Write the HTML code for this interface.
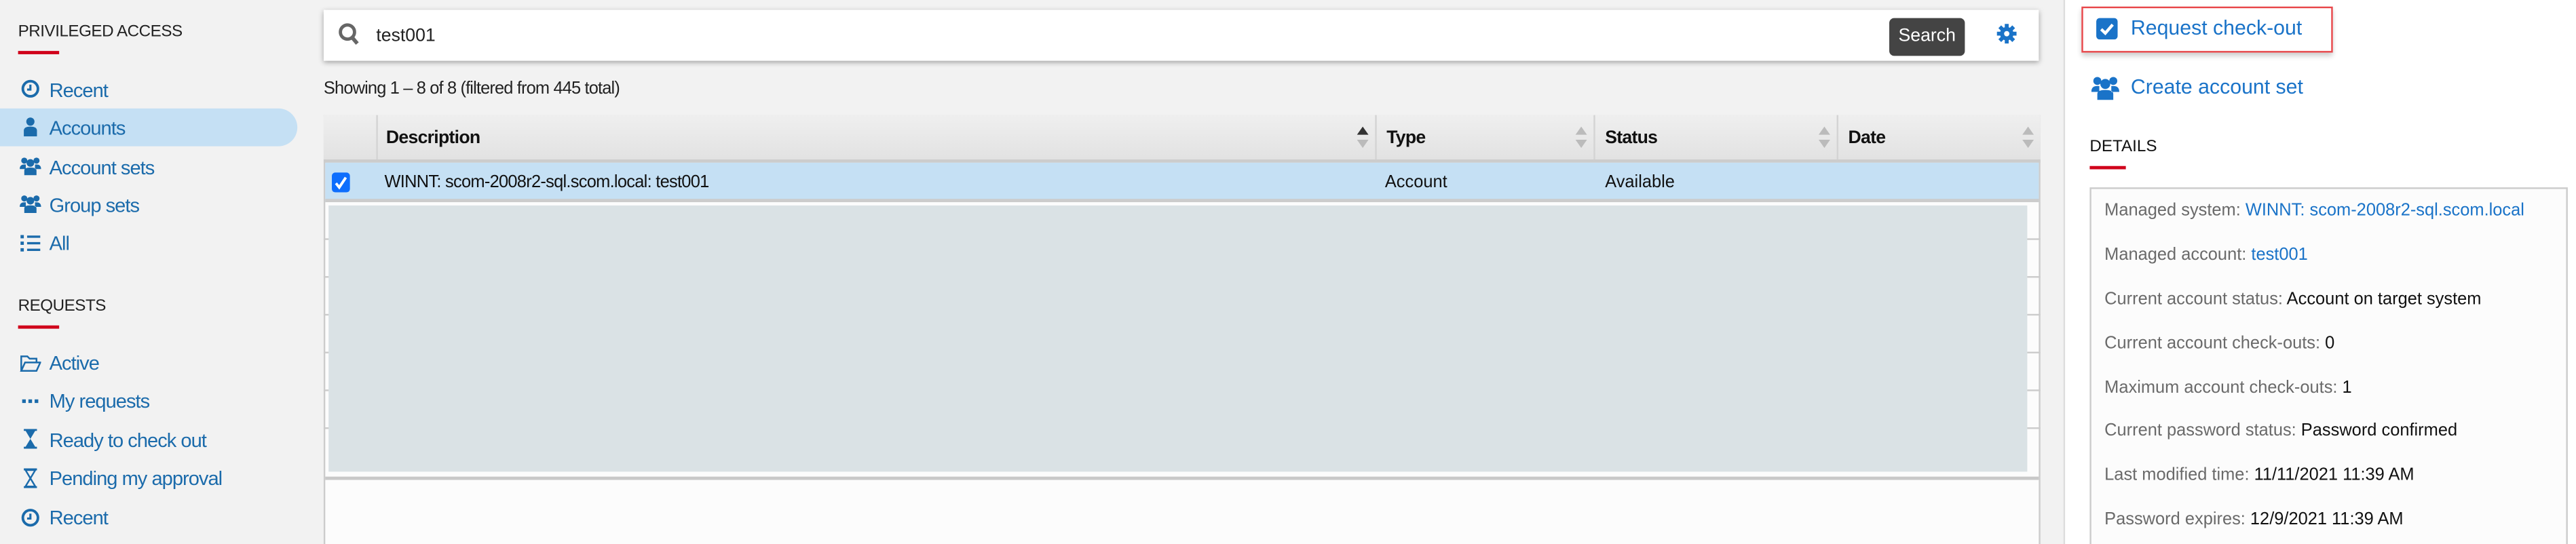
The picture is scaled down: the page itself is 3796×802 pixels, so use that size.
<!DOCTYPE html>
<html><head><meta charset="utf-8"><style>
html,body{margin:0;padding:0;width:3796px;height:802px;overflow:hidden;background:#f2f2f2}
#w{position:absolute;left:0;top:0;width:1568px;height:331px;transform:scale(2.4209,2.423);transform-origin:0 0;font-family:"Liberation Sans",sans-serif;background:#f2f2f2;overflow:hidden}
.a{position:absolute;white-space:nowrap}
.h{font-size:10px;color:#222;letter-spacing:-.2px}
.ul{position:absolute;height:2px;width:24px;background:#d0021b}
.it{font-size:12px;color:#1b6bab;letter-spacing:-.4px}
.ic{position:absolute;width:13px;height:12px}
.col{position:absolute;top:70px;height:27px;border-right:1px solid #d4d4d4;font-size:11px;color:#111;font-weight:bold;letter-spacing:-.3px}
.col span{position:absolute;left:6px;top:8px}
.sort{position:absolute;right:4px;top:7px;width:7px;height:13px}
.row{position:absolute;left:197px;width:1045px;height:1px;background:#ccc}
.d{position:absolute;left:1281px;font-size:10.5px;color:#6a6a6a;letter-spacing:0px;white-space:nowrap}
.d b{font-weight:normal;color:#111}
.d i{font-style:normal;color:#1a73c8}
</style></head><body><div id="w">
<div class="a h" style="left:11px;top:14px">PRIVILEGED ACCESS</div>
<div class="ul" style="left:11px;top:31px;width:25px"></div>
<div class="a" style="left:0;top:66px;width:181px;height:23px;background:#c5e0f4;border-radius:0 12px 12px 0"></div>
<svg class="ic" style="left:12px;top:48px" viewBox="0 0 12 12"><circle cx="6" cy="6" r="4.6" fill="none" stroke="#1b6bab" stroke-width="1.6"/><path d="M6 3.5V6.5H4" fill="none" stroke="#1b6bab" stroke-width="1.3"/></svg>
<div class="a it" style="left:30px;top:48px">Recent</div>
<svg class="ic" style="left:12px;top:71px" viewBox="0 0 12 12"><circle cx="6" cy="3" r="2.5" fill="#1b6bab"/><path d="M2 12V8.5Q2 6 6 6Q10 6 10 8.5V12Z" fill="#1b6bab"/></svg>
<div class="a it" style="left:30px;top:71px">Accounts</div>
<svg class="ic" style="left:12px;top:95px" viewBox="0 0 14 12"><circle cx="3" cy="2.5" r="2" fill="#1b6bab"/><circle cx="11" cy="2.5" r="2" fill="#1b6bab"/><circle cx="7" cy="4" r="2.5" fill="#1b6bab"/><path d="M0 8Q0 5 3 5H4V8ZM14 8Q14 5 11 5H10V8Z M3 12V9Q3 7 7 7Q11 7 11 9V12Z" fill="#1b6bab"/></svg>
<div class="a it" style="left:30px;top:95px">Account sets</div>
<svg class="ic" style="left:12px;top:118px" viewBox="0 0 14 12"><circle cx="3" cy="2.5" r="2" fill="#1b6bab"/><circle cx="11" cy="2.5" r="2" fill="#1b6bab"/><circle cx="7" cy="4" r="2.5" fill="#1b6bab"/><path d="M0 8Q0 5 3 5H4V8ZM14 8Q14 5 11 5H10V8Z M3 12V9Q3 7 7 7Q11 7 11 9V12Z" fill="#1b6bab"/></svg>
<div class="a it" style="left:30px;top:118px">Group sets</div>
<svg class="ic" style="left:12px;top:142px" viewBox="0 0 12 12"><path d="M0 1h2v2H0zM0 5h2v2H0zM0 9h2v2H0zM4 1.3h8v1.4H4zM4 5.3h8v1.4H4zM4 9.3h8v1.4H4z" fill="#1b6bab"/></svg>
<div class="a it" style="left:30px;top:141px">All</div>
<div class="a h" style="left:11px;top:181px">REQUESTS</div>
<div class="ul" style="left:11px;top:198px;width:25px"></div>
<svg class="ic" style="left:12px;top:215px" viewBox="0 0 14 12"><path d="M1 11V1.5H5L6.5 3H11V5.5M1 11L3.5 5.5H13.5L11 11Z" fill="none" stroke="#1b6bab" stroke-width="1.1"/></svg>
<div class="a it" style="left:30px;top:214px">Active</div>
<svg class="ic" style="left:12px;top:238px" viewBox="0 0 12 12"><rect x="1" y="5" width="2.2" height="2.2" fill="#1b6bab"/><rect x="4.8" y="5" width="2.2" height="2.2" fill="#1b6bab"/><rect x="8.6" y="5" width="2.2" height="2.2" fill="#1b6bab"/></svg>
<div class="a it" style="left:30px;top:237px">My requests</div>
<svg class="ic" style="left:12px;top:261px" viewBox="0 0 12 12"><path d="M2 0.6h8M2 11.4h8" stroke="#1b6bab" stroke-width="1.2"/><path d="M3 1H9L6 6ZM6 6L9 11H3Z" fill="#1b6bab"/></svg>
<div class="a it" style="left:30px;top:261px">Ready to check out</div>
<svg class="ic" style="left:12px;top:285px" viewBox="0 0 12 12"><path d="M2 0.6h8M2 11.4h8" stroke="#1b6bab" stroke-width="1.2"/><path d="M3 1H9L6 6ZM6 6L9 11H3Z" fill="none" stroke="#1b6bab" stroke-width="1"/></svg>
<div class="a it" style="left:30px;top:284px">Pending my approval</div>
<svg class="ic" style="left:12px;top:309px" viewBox="0 0 12 12"><circle cx="6" cy="6" r="4.6" fill="none" stroke="#1b6bab" stroke-width="1.6"/><path d="M6 3.5V6.5H4" fill="none" stroke="#1b6bab" stroke-width="1.3"/></svg>
<div class="a it" style="left:30px;top:308px">Recent</div>
<div class="a" style="left:197px;top:6px;width:1044px;height:31px;background:#fff;box-shadow:0 1px 3px rgba(0,0,0,.35)"></div>
<svg class="a" style="left:206px;top:14px" width="13" height="14" viewBox="0 0 13 14"><circle cx="5.5" cy="5.5" r="4.3" fill="none" stroke="#666" stroke-width="2"/><path d="M8.5 9L11.5 12.5" stroke="#666" stroke-width="2.3"/></svg>
<div class="a" style="left:229px;top:16px;font-size:11px;color:#222">test001</div>
<div class="a" style="left:1150px;top:11px;width:46px;height:23px;background:#444;border-radius:3px;color:#fff;font-size:11px;text-align:center;line-height:22px">Search</div>
<svg class="a" style="left:1215px;top:14px" width="13" height="13" viewBox="0 0 12 12"><circle cx="6" cy="6" r="3.8" fill="#1a73c8"/><path d="M6 0.5V11.5M0.5 6H11.5M2.1 2.1L9.9 9.9M9.9 2.1L2.1 9.9" stroke="#1a73c8" stroke-width="2.2"/><circle cx="6" cy="6" r="1.5" fill="#fff"/></svg>
<div class="a" style="left:197px;top:48px;font-size:10.5px;color:#222;letter-spacing:-.35px">Showing 1 – 8 of 8 (filtered from 445 total)</div>
<div class="a" style="left:197px;top:70px;width:1045px;height:261px;background:#fcfcfc;border:1px solid #ccc;border-bottom:none;box-sizing:border-box"></div>
<div class="a" style="left:197px;top:70px;width:1045px;height:27px;background:linear-gradient(#efefef,#e2e2e2);border-bottom:2px solid #ccc"></div>
<div class="col" style="left:197px;width:32px"></div>
<div class="col" style="left:229px;width:608px"><span>Description</span><svg class="sort" viewBox="0 0 7 13"><path d="M0 5L3.5 0L7 5Z" fill="#333"/><path d="M0 8L3.5 13L7 8Z" fill="#bbb"/></svg></div>
<div class="col" style="left:838px;width:132px"><span>Type</span><svg class="sort" viewBox="0 0 7 13"><path d="M0 5L3.5 0L7 5Z" fill="#bbb"/><path d="M0 8L3.5 13L7 8Z" fill="#bbb"/></svg></div>
<div class="col" style="left:971px;width:147px"><span>Status</span><svg class="sort" viewBox="0 0 7 13"><path d="M0 5L3.5 0L7 5Z" fill="#bbb"/><path d="M0 8L3.5 13L7 8Z" fill="#bbb"/></svg></div>
<div class="col" style="left:1119px;width:123px;border-right:none"><span>Date</span><svg class="sort" viewBox="0 0 7 13"><path d="M0 5L3.5 0L7 5Z" fill="#bbb"/><path d="M0 8L3.5 13L7 8Z" fill="#bbb"/></svg></div>
<div class="a" style="left:198px;top:99px;width:1043px;height:22px;background:#c5e0f4;border-bottom:2px solid #ccc"></div>
<div class="a" style="left:202px;top:105px;width:11px;height:12px;background:#0d6efd;border-radius:2px"></div>
<svg class="a" style="left:202px;top:105px" width="11" height="12" viewBox="0 0 11 12"><path d="M2.5 6.5L4.5 9L8.5 3" fill="none" stroke="#fff" stroke-width="1.6"/></svg>
<div class="a" style="left:234px;top:105px;font-size:10.5px;color:#111;letter-spacing:-.3px">WINNT: scom-2008r2-sql.scom.local: test001</div>
<div class="a" style="left:843px;top:105px;font-size:10.5px;color:#111">Account</div>
<div class="a" style="left:977px;top:105px;font-size:10.5px;color:#111">Available</div>
<div class="row" style="top:145px"></div><div class="row" style="top:168px"></div><div class="row" style="top:191px"></div><div class="row" style="top:214px"></div><div class="row" style="top:237px"></div><div class="row" style="top:260px"></div>
<div class="a" style="left:200px;top:125px;width:1034px;height:162px;background:#dae2e5"></div>
<div class="a" style="left:198px;top:290px;width:1043px;height:2px;background:#c8c8c8"></div>
<div class="a" style="left:1250px;top:0;width:6px;height:331px;background:#f2f2f2"></div>
<div class="a" style="left:1256px;top:0;width:312px;height:331px;background:#fff;border-left:1px solid #ddd"></div>
<div class="a" style="left:1267px;top:4px;width:153px;height:28px;border:1.5px solid #e8474b;box-sizing:border-box;box-shadow:0 2px 3px rgba(0,0,0,.2);background:#fff"></div>
<div class="a" style="left:1276px;top:11px;width:13px;height:13px;background:#1a73c8;border-radius:2px"></div>
<svg class="a" style="left:1276px;top:11px" width="13" height="13" viewBox="0 0 13 13"><path d="M3 6.8L5.5 9.2L10 4" fill="none" stroke="#fff" stroke-width="1.8"/></svg>
<div class="a" style="left:1297px;top:10px;font-size:12.5px;color:#1a73c8">Request check-out</div>
<svg class="a" style="left:1273px;top:46px" width="17" height="15" viewBox="0 0 14 12"><circle cx="3" cy="2.5" r="2" fill="#1a73c8"/><circle cx="11" cy="2.5" r="2" fill="#1a73c8"/><circle cx="7" cy="4" r="2.5" fill="#1a73c8"/><path d="M0 8Q0 5 3 5H4V8ZM14 8Q14 5 11 5H10V8Z M3 12V9Q3 7 7 7Q11 7 11 9V12Z" fill="#1a73c8"/></svg>
<div class="a" style="left:1297px;top:46px;font-size:12.5px;color:#1a73c8">Create account set</div>
<div class="a" style="left:1272px;top:84px;font-size:10px;color:#111">DETAILS</div>
<div class="ul" style="left:1272px;top:101px;width:22px"></div>
<div class="a" style="left:1272px;top:114px;width:291px;height:220px;border:1px solid #ccc;background:#fcfcfc;box-sizing:border-box"></div>
<div class="d" style="top:122px">Managed system: <i>WINNT: scom-2008r2-sql.scom.local</i></div>
<div class="d" style="top:149px">Managed account: <i>test001</i></div>
<div class="d" style="top:176px">Current account status: <b>Account on target system</b></div>
<div class="d" style="top:203px">Current account check-outs: <b>0</b></div>
<div class="d" style="top:230px">Maximum account check-outs: <b>1</b></div>
<div class="d" style="top:256px">Current password status: <b>Password confirmed</b></div>
<div class="d" style="top:283px">Last modified time: <b>11/11/2021 11:39 AM</b></div>
<div class="d" style="top:310px">Password expires: <b>12/9/2021 11:39 AM</b></div>
</div></body></html>
